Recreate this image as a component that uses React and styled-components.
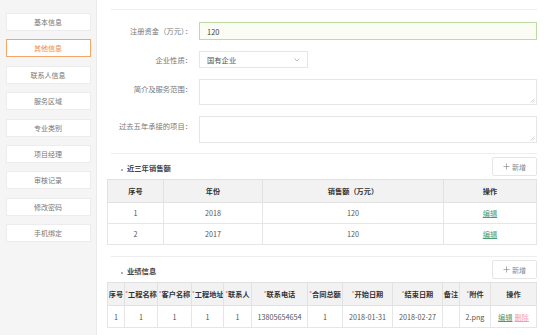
import React from "react";
import styled, { createGlobalStyle } from "styled-components";

const GlobalStyle = createGlobalStyle`
  html, body {
    margin: 0;
    padding: 0;
    background: #fff;
    font-family: "Noto Sans CJK SC", "Noto Sans", sans-serif;
  }
`;

const Page = styled.div`
  display: flex;
  width: 554px;
  height: 335px;
  overflow: hidden;
`;

const Sidebar = styled.nav`
  width: 97px;
  flex: none;
  background: #f5f5f5;
  border-right: 1px solid #ebebeb;
  padding-top: 13px;
  box-sizing: border-box;
  display: flex;
  flex-direction: column;
  align-items: center;
  gap: 8.4px;
`;

const NavButton = styled.div`
  width: 85px;
  height: 18px;
  box-sizing: border-box;
  display: flex;
  align-items: center;
  justify-content: center;
  background: #fff;
  border: 1px solid ${(p) => (p.$active ? "#f4a66a" : "#ececec")};
  color: ${(p) => (p.$active ? "#f08a3c" : "#777")};
  font-size: 7px;
`;

const Main = styled.main`
  flex: 1;
  padding: 9px 18px 0 13px;
  box-sizing: border-box;
`;

const Divider = styled.div`
  height: 1px;
  background: #ededed;
  margin-left: 1px;
`;

const Form = styled.div`
  display: flex;
  flex-direction: column;
  padding: 12px 0 10px;
  gap: 11px;
`;

const FormRow = styled.div`
  display: flex;
  align-items: ${(p) => (p.$top ? "flex-start" : "center")};
  gap: 7px;
`;

const Label = styled.label`
  width: 82px;
  text-align: right;
  font-size: 7.3px;
  color: #777;
  white-space: nowrap;
  padding-top: ${(p) => (p.$top ? "5px" : "0")};
`;

const Input = styled.div`
  flex: 1;
  height: 18px;
  box-sizing: border-box;
  border: 1px solid #bfdba4;
  background: #fbfdf4;
  font-size: 7.5px;
  color: #444;
  display: flex;
  align-items: center;
  padding-left: 7px;
`;

const Select = styled.div`
  width: 109px;
  height: 17px;
  box-sizing: border-box;
  border: 1px solid #e6e6e6;
  font-size: 7.3px;
  color: #555;
  display: flex;
  align-items: center;
  justify-content: space-between;
  padding: 0 7px;
`;

const TextArea = styled.div`
  flex: 1;
  position: relative;
  height: ${(p) => p.$h}px;
  box-sizing: border-box;
  border: 1px solid #e6e6e6;
`;

const Grip = styled.svg`
  position: absolute;
  right: 1px;
  bottom: 1px;
`;

const SectionHead = styled.div`
  display: flex;
  align-items: center;
  justify-content: space-between;
  padding: 3px 0 3px 11px;
`;

const SectionTitle = styled.div`
  display: flex;
  align-items: center;
  gap: 4px;
  font-size: 7.3px;
  font-weight: bold;
  color: #444;
  margin-top: 3px;
  &::before {
    content: "";
    width: 2px;
    height: 2px;
    border-radius: 50%;
    background: #999;
    margin-top: 3px;
  }
`;

const AddButton = styled.div`
  width: 45px;
  height: 19px;
  box-sizing: border-box;
  border: 1px solid #e6e6e6;
  border-radius: 2px;
  display: flex;
  align-items: center;
  justify-content: center;
  gap: 2px;
  font-size: 7px;
  color: #888;
`;

const Table = styled.table`
  width: 429px;
  margin-left: -3px;
  border-collapse: collapse;
  table-layout: fixed;
  font-size: 7.2px;
  margin-bottom: ${(p) => p.$mb}px;
`;

const Th = styled.th`
  height: 22px;
  padding: 0;
  background: #f2f2f2;
  border: 1px solid #e2e2e2;
  color: #333;
  font-weight: bold;
  text-align: center;
  white-space: nowrap;
  overflow: hidden;
`;

const Td = styled.td`
  height: ${(p) => p.$h || 20}px;
  padding: 0;
  border: 1px solid #e6e6e6;
  color: #555;
  text-align: center;
  white-space: nowrap;
  overflow: hidden;
`;

const Req = styled.span`
  color: #e55;
  font-weight: normal;
  font-size: 6px;
  vertical-align: top;
`;

const Link = styled.span`
  color: ${(p) => (p.$danger ? "#f59bb4" : "#4f9a72")};
  text-decoration: underline;
  margin: 0 1px;
`;

const navItems = ["基本信息", "其他信息", "联系人信息", "服务区域", "专业类别", "项目经理", "审核记录", "修改密码", "手机绑定"];

const sales = [
  { no: 1, year: 2018, amount: 120 },
  { no: 2, year: 2017, amount: 120 },
];

const perfCols = [
  { t: "序号", w: 17 },
  { t: "工程名称", w: 33, r: true },
  { t: "客户名称", w: 34, r: true },
  { t: "工程地址", w: 32, r: true },
  { t: "联系人", w: 28, r: true },
  { t: "联系电话", w: 56, r: true },
  { t: "合同总额", w: 35, r: true },
  { t: "开始日期", w: 50, r: true },
  { t: "结束日期", w: 50, r: true },
  { t: "备注", w: 17 },
  { t: "附件", w: 31, r: true },
  { t: "操作", w: 46 },
];

const perfRow = ["1", "1", "1", "1", "1", "13805654654", "1", "2018-01-31", "2018-02-27", "", "2.png"];

const Plus = () => (
  <svg width="7" height="7" viewBox="0 0 7 7">
    <path d="M3.5 0.5v6M0.5 3.5h6" stroke="#999" strokeWidth="0.8" />
  </svg>
);

const ResizeGrip = () => (
  <Grip width="5" height="5" viewBox="0 0 5 5">
    <path d="M4.5 0.5L0.5 4.5M4.5 2.5L2.5 4.5" stroke="#bbb" strokeWidth="0.6" />
  </Grip>
);

export default function App() {
  return (
    <Page>
      <GlobalStyle />
      <Sidebar>
        {navItems.map((item, i) => (
          <NavButton key={item} $active={i === 1}>{item}</NavButton>
        ))}
      </Sidebar>
      <Main>
        <Divider />
        <Form>
          <FormRow>
            <Label>注册资金（万元）：</Label>
            <Input>120</Input>
          </FormRow>
          <FormRow>
            <Label>企业性质：</Label>
            <Select>
              国有企业
              <svg width="6" height="4" viewBox="0 0 6 4">
                <path d="M0.5 0.5L3 3L5.5 0.5" fill="none" stroke="#aaa" strokeWidth="0.8" />
              </svg>
            </Select>
          </FormRow>
          <FormRow $top>
            <Label $top>简介及服务范围：</Label>
            <TextArea $h={26}><ResizeGrip /></TextArea>
          </FormRow>
          <FormRow $top>
            <Label $top>过去五年承接的项目：</Label>
            <TextArea $h={27}><ResizeGrip /></TextArea>
          </FormRow>
        </Form>
        <Divider />
        <SectionHead>
          <SectionTitle>近三年销售额</SectionTitle>
          <AddButton><Plus />新增</AddButton>
        </SectionHead>
        <Table $mb={11}>
          <colgroup>
            <col style={{ width: 56 }} />
            <col style={{ width: 99 }} />
            <col style={{ width: 181 }} />
            <col style={{ width: 93 }} />
          </colgroup>
          <thead>
            <tr>
              <Th>序号</Th>
              <Th>年份</Th>
              <Th>销售额（万元）</Th>
              <Th>操作</Th>
            </tr>
          </thead>
          <tbody>
            {sales.map((s) => (
              <tr key={s.no}>
                <Td>{s.no}</Td>
                <Td>{s.year}</Td>
                <Td>{s.amount}</Td>
                <Td><Link>编辑</Link></Td>
              </tr>
            ))}
          </tbody>
        </Table>
        <Divider />
        <SectionHead>
          <SectionTitle>业绩信息</SectionTitle>
          <AddButton><Plus />新增</AddButton>
        </SectionHead>
        <Table $mb={9}>
          <colgroup>
            {perfCols.map((c) => (
              <col key={c.t} style={{ width: c.w }} />
            ))}
          </colgroup>
          <thead>
            <tr>
              {perfCols.map((c) => (
                <Th key={c.t}>{c.r && <Req>*</Req>}{c.t}</Th>
              ))}
            </tr>
          </thead>
          <tbody>
            <tr>
              {perfRow.map((v, i) => (
                <Td key={i} $h={21}>{v}</Td>
              ))}
              <Td $h={21}><Link>编辑</Link><Link $danger>删除</Link></Td>
            </tr>
          </tbody>
        </Table>
        <Divider />
      </Main>
    </Page>
  );
}
